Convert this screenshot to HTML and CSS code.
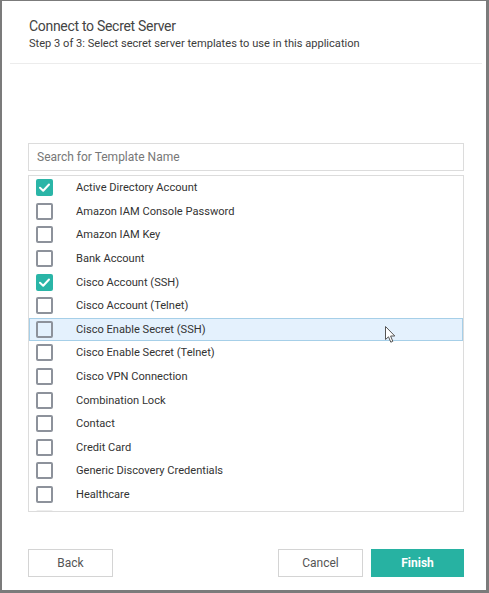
FILE: index.html
```html
<!DOCTYPE html>
<html>
<head>
<meta charset="utf-8">
<link rel="stylesheet" href="styles.css">
</head>
<body>
<div class="frame">
  <div class="header">
    <h1 class="title">Connect to Secret Server</h1>
    <p class="subtitle">Step 3 of 3: Select secret server templates to use in this application</p>
  </div>
  <div class="content">
    <div class="search">Search for Template Name</div>
    <div class="list">
      <div class="row"><span class="cb checked"><svg viewBox="0 0 17 17" width="17" height="17"><path d="M4 8.8 L7.2 11.8 L13 5.5" fill="none" stroke="#fff" stroke-width="2" stroke-linecap="round" stroke-linejoin="round"/></svg></span><span class="label">Active Directory Account</span></div>
      <div class="row"><span class="cb"></span><span class="label">Amazon IAM Console Password</span></div>
      <div class="row"><span class="cb"></span><span class="label">Amazon IAM Key</span></div>
      <div class="row"><span class="cb"></span><span class="label">Bank Account</span></div>
      <div class="row"><span class="cb checked"><svg viewBox="0 0 17 17" width="17" height="17"><path d="M4 8.8 L7.2 11.8 L13 5.5" fill="none" stroke="#fff" stroke-width="2" stroke-linecap="round" stroke-linejoin="round"/></svg></span><span class="label">Cisco Account (SSH)</span></div>
      <div class="row"><span class="cb"></span><span class="label">Cisco Account (Telnet)</span></div>
      <div class="row hover"><span class="cb"></span><span class="label">Cisco Enable Secret (SSH)</span>
        <svg class="cursor" viewBox="0 0 12 18" width="12" height="18"><path d="M0.5 0.5 L0.5 13.5 L3.5 10.8 L5.8 16.2 L7.8 15.3 L5.6 10 L9.8 10 Z" fill="#fff" stroke="#555" stroke-width="1"/></svg>
      </div>
      <div class="row"><span class="cb"></span><span class="label">Cisco Enable Secret (Telnet)</span></div>
      <div class="row"><span class="cb"></span><span class="label">Cisco VPN Connection</span></div>
      <div class="row"><span class="cb"></span><span class="label">Combination Lock</span></div>
      <div class="row"><span class="cb"></span><span class="label">Contact</span></div>
      <div class="row"><span class="cb"></span><span class="label">Credit Card</span></div>
      <div class="row"><span class="cb"></span><span class="label">Generic Discovery Credentials</span></div>
      <div class="row"><span class="cb"></span><span class="label">Healthcare</span></div>
      <div class="row"><span class="cb faint"></span><span class="label"></span></div>
    </div>
  </div>
  <div class="footer">
    <button class="btn">Back</button>
    <div class="spacer"></div>
    <button class="btn">Cancel</button>
    <button class="btn primary">Finish</button>
  </div>
</div>
</body>
</html>
```
FILE: styles.css
```css
* { box-sizing: border-box; }
html, body { margin: 0; padding: 0; background: #fff; }
body { width: 489px; height: 593px; overflow: hidden; font-family: Roboto, "Liberation Sans", sans-serif; }
.frame {
  width: 489px;
  height: 593px;
  border-left: 2px solid #7b7b7b;
  border-top: 1px solid #7b7b7b;
  border-right: 3px solid #7b7b7b;
  border-bottom: 3px solid #7b7b7b;
  display: flex;
  flex-direction: column;
  background: #fff;
}
.header {
  margin: 0 4px 0 8px;
  padding: 16px 0 12px 19px;
  border-bottom: 1px solid #ececec;
}
.title {
  margin: 0;
  font-size: 14px;
  letter-spacing: -0.3px;
  font-weight: 400;
  color: #444;
  line-height: 19px;
}
.subtitle {
  margin: 1px 0 0 0;
  font-size: 11.1px;
  color: #3c3c3c;
  line-height: 14px;
}
.content {
  padding: 79px 22px 0 26px;
}
.search {
  height: 28px;
  border: 1px solid #dcdcdc;
  padding: 0 8px;
  font-size: 12px;
  color: #777;
  line-height: 26px;
}
.list {
  margin-top: 4px;
  width: 436px;
  height: 337px;
  border: 1px solid #dcdcdc;
  overflow: hidden;
  padding-top: 0;
}
.row {
  position: relative;
  height: 23.6px;
  display: flex;
  align-items: center;
  padding-left: 7px;
}
.row.hover {
  background: #e4f1fd;
  border: 1px solid #a6cfe8;
  padding-left: 6px;
}
.cb {
  width: 17px;
  height: 17px;
  border: 2px solid #8d929b;
  border-radius: 2px;
  flex: none;
  display: flex;
}
.cb.checked {
  border: none;
  background: #2ab5a7;
}
.cb.faint { border-color: #eee; }
.label {
  margin-left: 23px;
  font-size: 11.1px;
  color: #333;
}
.cursor {
  position: absolute;
  left: 355px;
  top: 7px;
}
.footer {
  margin-top: auto;
  display: flex;
  padding: 0 22px 13px 26px;
}
.spacer { flex: 1; }
.btn {
  height: 28px;
  border: 1px solid #d4d4d4;
  background: #fff;
  font-family: Roboto, "Liberation Sans", sans-serif;
  font-size: 12px;
  color: #555;
  width: 85px;
  padding: 0;
}
.btn + .btn { margin-left: 8px; }
.btn.primary {
  width: 93px;
  background: #27b2a2;
  border-color: #27b2a2;
  color: #fff;
  font-weight: 700;
}
```
